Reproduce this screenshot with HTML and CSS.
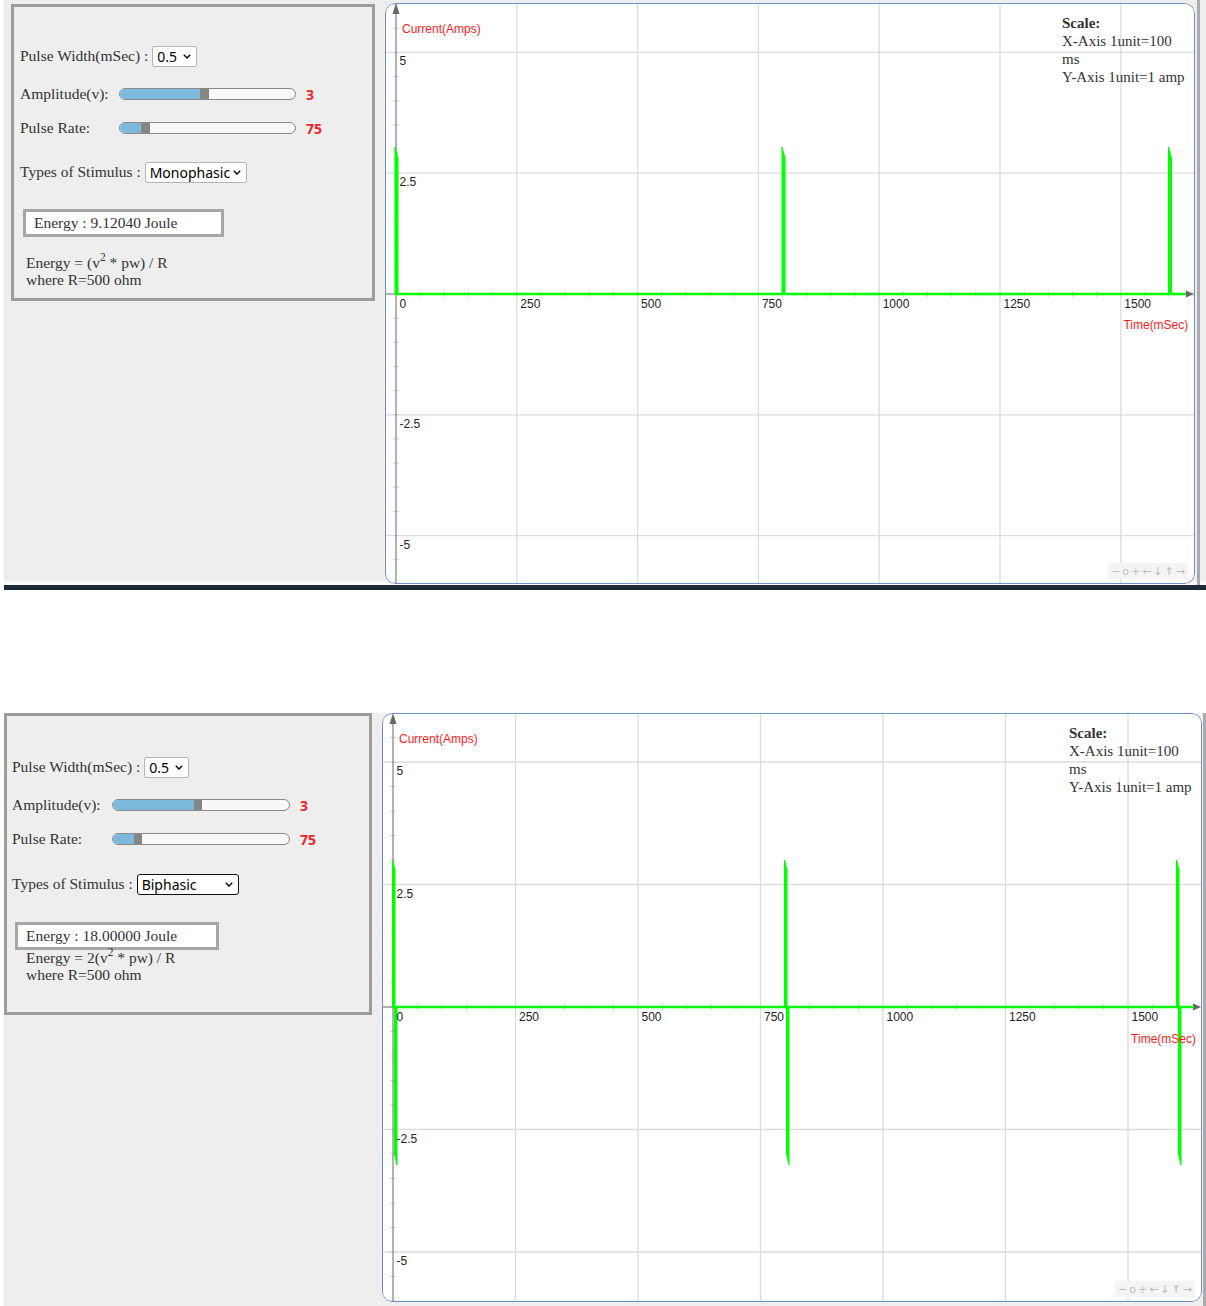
FILE: index.html
```html
<!DOCTYPE html>
<html lang="en">
<head>
<meta charset="utf-8">
<title>Stimulus simulator</title>
<link rel="stylesheet" href="styles.css">
</head>
<body>

<section class="sim sim--mono">
  <div class="panel panel--mono">
    <div class="row row--pw">
      <span class="label">Pulse Width(mSec) :&nbsp;</span>
      <span class="select select--pw">
        <select><option>0.5</option></select>
        <svg class="chev" width="8" height="5" viewBox="0 0 8 5"><polyline points="0.8,0.8 4,4 7.2,0.8"/></svg>
      </span>
    </div>
    <div class="row row--amp">
      <span class="label label--fixed">Amplitude(v):</span>
      <div class="range" role="slider" aria-valuenow="3"><div class="range-fill" style="--pos:80px"></div><div class="range-thumb"></div></div>
      <span class="value">3</span>
    </div>
    <div class="row row--rate">
      <span class="label label--fixed">Pulse Rate:</span>
      <div class="range" role="slider" aria-valuenow="75"><div class="range-fill" style="--pos:21px"></div><div class="range-thumb"></div></div>
      <span class="value">75</span>
    </div>
    <div class="row row--types">
      <span class="label">Types of Stimulus :&nbsp;</span>
      <span class="select select--type">
        <select><option>Monophasic</option><option>Biphasic</option></select>
        <svg class="chev" width="8" height="5" viewBox="0 0 8 5"><polyline points="0.8,0.8 4,4 7.2,0.8"/></svg>
      </span>
    </div>
    <div class="energy">Energy : 9.12040 Joule</div>
    <div class="formula">Energy = (v<sup>2</sup> * pw) / R<br>where R=500 ohm</div>
  </div>

  <div class="chart chart--mono">
    <svg class="plot" width="810" height="581" viewBox="0 0 810 581">
      <defs>
        <pattern id="tx1" patternUnits="userSpaceOnUse" x="-1.08" y="288" width="24.16" height="6"><line class="tick" x1="12.08" y1="0" x2="12.08" y2="6"/></pattern>
        <pattern id="ty1" patternUnits="userSpaceOnUse" x="8" y="278.92" width="6" height="24.16"><line class="tick" x1="0" y1="12.08" x2="6" y2="12.08"/></pattern>
      </defs>
      <g class="grid">
        <line x1="131.8" y1="0" x2="131.8" y2="581"/>
        <line x1="252.6" y1="0" x2="252.6" y2="581"/>
        <line x1="373.4" y1="0" x2="373.4" y2="581"/>
        <line x1="494.2" y1="0" x2="494.2" y2="581"/>
        <line x1="615" y1="0" x2="615" y2="581"/>
        <line x1="735.8" y1="0" x2="735.8" y2="581"/>
        <line x1="0" y1="49.4" x2="810" y2="49.4"/>
        <line x1="0" y1="170.2" x2="810" y2="170.2"/>
        <line x1="0" y1="411.8" x2="810" y2="411.8"/>
        <line x1="0" y1="532.6" x2="810" y2="532.6"/>
      </g>
      <rect x="11" y="288" width="799" height="6" fill="url(#tx1)"/>
      <rect x="8" y="0" width="6" height="581" fill="url(#ty1)"/>
      <g class="axis">
        <line x1="0" y1="291" x2="803" y2="291"/>
        <line x1="11" y1="10" x2="11" y2="581"/>
      </g>
      <g class="arrow">
        <polygon points="809,291 801,287.5 801,294.5"/>
        <polygon points="11,0 7.5,11 14.5,11"/>
      </g>
      <g class="signal">
        <line class="base" x1="11" y1="291" x2="801" y2="291"/>
        <polygon points="10,291 10,144 13,155 13,291"/>
        <polygon points="397,291 397,144 400,155 400,291"/>
        <polygon points="783.5,291 783.5,144 786.5,155 786.5,291"/>
      </g>
      <g class="ticklabel">
        <text x="14.5" y="304.5">0</text>
        <text x="135.3" y="304.5">250</text>
        <text x="256.1" y="304.5">500</text>
        <text x="376.9" y="304.5">750</text>
        <text x="497.7" y="304.5">1000</text>
        <text x="618.5" y="304.5">1250</text>
        <text x="739.3" y="304.5">1500</text>
        <text x="14.5" y="62.4">5</text>
        <text x="14.5" y="183.2">2.5</text>
        <text x="14.5" y="424.8">-2.5</text>
        <text x="14.5" y="545.6">-5</text>
      </g>
      <text class="axis-title" x="17" y="29.5">Current(Amps)</text>
      <text class="axis-title" x="803.3" y="326" text-anchor="end">Time(mSec)</text>
    </svg>
    <div class="scale"><b>Scale:</b><br>X-Axis 1unit=100<br>ms<br>Y-Axis 1unit=1 amp</div>
    <div class="nav"><span>&minus;</span><span>o</span><span>+</span><span>&larr;</span><span>&darr;</span><span>&uarr;</span><span>&rarr;</span></div>
  </div>
  <div class="edge edge--mono"></div>
</section>

<div class="taskbar"></div>

<section class="sim sim--bi">
  <div class="panel panel--bi">
    <div class="row row--pw">
      <span class="label">Pulse Width(mSec) :&nbsp;</span>
      <span class="select select--pw">
        <select><option>0.5</option></select>
        <svg class="chev" width="8" height="5" viewBox="0 0 8 5"><polyline points="0.8,0.8 4,4 7.2,0.8"/></svg>
      </span>
    </div>
    <div class="row row--amp">
      <span class="label label--fixed">Amplitude(v):</span>
      <div class="range" role="slider" aria-valuenow="3"><div class="range-fill" style="--pos:80.6px"></div><div class="range-thumb"></div></div>
      <span class="value">3</span>
    </div>
    <div class="row row--rate">
      <span class="label label--fixed">Pulse Rate:</span>
      <div class="range" role="slider" aria-valuenow="75"><div class="range-fill" style="--pos:20.6px"></div><div class="range-thumb"></div></div>
      <span class="value">75</span>
    </div>
    <div class="row row--types">
      <span class="label">Types of Stimulus :&nbsp;</span>
      <span class="select select--type select--active">
        <select><option>Biphasic</option><option>Monophasic</option></select>
        <svg class="chev" width="8" height="5" viewBox="0 0 8 5"><polyline points="0.8,0.8 4,4 7.2,0.8"/></svg>
      </span>
    </div>
    <div class="energy">Energy : 18.00000 Joule</div>
    <div class="formula">Energy = 2(v<sup>2</sup> * pw) / R<br>where R=500 ohm</div>
  </div>

  <div class="chart chart--bi">
    <svg class="plot" width="820" height="589" viewBox="0 0 820 589">
      <defs>
        <pattern id="tx2" patternUnits="userSpaceOnUse" x="-1.25" y="291" width="24.5" height="6"><line class="tick" x1="12.25" y1="0" x2="12.25" y2="6"/></pattern>
        <pattern id="ty2" patternUnits="userSpaceOnUse" x="8" y="281.75" width="6" height="24.5"><line class="tick" x1="0" y1="12.25" x2="6" y2="12.25"/></pattern>
      </defs>
      <g class="grid">
        <line x1="133.5" y1="0" x2="133.5" y2="589"/>
        <line x1="256" y1="0" x2="256" y2="589"/>
        <line x1="378.5" y1="0" x2="378.5" y2="589"/>
        <line x1="501" y1="0" x2="501" y2="589"/>
        <line x1="623.5" y1="0" x2="623.5" y2="589"/>
        <line x1="746" y1="0" x2="746" y2="589"/>
        <line x1="0" y1="49" x2="820" y2="49"/>
        <line x1="0" y1="171.5" x2="820" y2="171.5"/>
        <line x1="0" y1="416.5" x2="820" y2="416.5"/>
        <line x1="0" y1="539" x2="820" y2="539"/>
      </g>
      <rect x="11" y="291" width="809" height="6" fill="url(#tx2)"/>
      <rect x="8" y="0" width="6" height="589" fill="url(#ty2)"/>
      <g class="axis">
        <line x1="0" y1="294" x2="813" y2="294"/>
        <line x1="11" y1="10" x2="11" y2="589"/>
      </g>
      <g class="arrow">
        <polygon points="819,294 811,290.5 811,297.5"/>
        <polygon points="11,0 7.5,11 14.5,11"/>
      </g>
      <g class="signal">
        <line class="base" x1="11" y1="294" x2="812" y2="294"/>
        <polygon points="10.5,294 10.5,147 13,157 13,294"/>
        <polygon points="12.5,294 12.5,441 15,452 15,294"/>
        <polygon points="402.5,294 402.5,147 405,157 405,294"/>
        <polygon points="404.5,294 404.5,441 407,452 407,294"/>
        <polygon points="794.5,294 794.5,147 797,157 797,294"/>
        <polygon points="796.5,294 796.5,441 799,452 799,294"/>
      </g>
      <g class="ticklabel">
        <text x="14.5" y="307.5">0</text>
        <text x="137" y="307.5">250</text>
        <text x="259.5" y="307.5">500</text>
        <text x="382" y="307.5">750</text>
        <text x="504.5" y="307.5">1000</text>
        <text x="627" y="307.5">1250</text>
        <text x="749.5" y="307.5">1500</text>
        <text x="14.5" y="62">5</text>
        <text x="14.5" y="184.5">2.5</text>
        <text x="14.5" y="429.5">-2.5</text>
        <text x="14.5" y="552">-5</text>
      </g>
      <text class="axis-title" x="17" y="29.5">Current(Amps)</text>
      <text class="axis-title" x="814" y="329.6" text-anchor="end">Time(mSec)</text>
    </svg>
    <div class="scale"><b>Scale:</b><br>X-Axis 1unit=100<br>ms<br>Y-Axis 1unit=1 amp</div>
    <div class="nav"><span>&minus;</span><span>o</span><span>+</span><span>&larr;</span><span>&darr;</span><span>&uarr;</span><span>&rarr;</span></div>
  </div>
  <div class="edge edge--bi"></div>
</section>

</body>
</html>
```

FILE: styles.css
```css
* { box-sizing: border-box; }

body {
  margin: 0;
  background: #fff;
  font-family: "Liberation Serif", "Times New Roman", serif;
  font-size: 15.5px;
  color: #333;
}

/* ---------- sections ---------- */
.sim {
  display: flex;
  align-items: flex-start;
  margin-left: 4px;
  background: #eee;
}
.sim--mono {
  height: 585px;
  box-shadow: inset 0 -4px 0 #f9f9f9;
}
.sim--bi {
  height: 593px;
  margin-top: 123px;
}
.taskbar {
  height: 5px;
  margin-left: 4px;
  background: #1d2b39;
}

.edge {
  flex: none;
  width: 3px;
  align-self: stretch;
  background: #ababab;
}
.edge--mono { margin-left: 2px; height: 585px; }
.edge--bi { margin-left: 1px; }

/* ---------- control panel ---------- */
.panel {
  flex: none;
  border: 3px solid #9d9d9d;
  background: #eee;
  display: flex;
  flex-direction: column;
  align-items: flex-start;
}
.panel--mono {
  width: 364px;
  height: 297px;
  margin: 4px 0 0 7px;
  padding-left: 6px;
}
.panel--bi {
  width: 368px;
  height: 302px;
  padding-left: 5px;
}

.row {
  display: flex;
  align-items: center;
  height: 24px;
  white-space: nowrap;
}
.panel--mono .row--pw { margin-top: 37px; }
.panel--mono .row--amp { margin-top: 14px; }
.panel--mono .row--rate { margin-top: 10px; }
.panel--mono .row--types { margin-top: 20px; }
.panel--bi .row--pw { margin-top: 39px; }
.panel--bi .row--amp { margin-top: 14px; }
.panel--bi .row--rate { margin-top: 10px; }
.panel--bi .row--types { margin-top: 21px; }

.label { color: #333; }
.label--fixed { width: 99px; }
.panel--bi .label--fixed { width: 100px; }

/* select */
.select {
  position: relative;
  display: inline-block;
}
.select select {
  appearance: none;
  -webkit-appearance: none;
  display: block;
  margin: 0;
  background: #fff;
  border: 1px solid #b4b4b4;
  border-radius: 2px;
  font-family: "Noto Sans", "Open Sans", sans-serif;
  font-size: 14px;
  line-height: 19px;
  color: #000;
  padding: 0 0 0 4px;
  height: 21px;
  outline: none;
}
.select--pw select { width: 45px; }
.select--type select { width: 102px; height: 21px; }
.select--active select {
  border: 1.5px solid #111;
  border-radius: 3px;
}
.chev {
  position: absolute;
  right: 6px;
  top: 8px;
  fill: none;
  stroke: #111;
  stroke-width: 1.5;
  pointer-events: none;
}

/* range */
.range {
  flex: none;
  display: flex;
  width: 177px;
  height: 12px;
  border: 1px solid #8a8a8a;
  border-radius: 6px;
  background: #f8f8f8;
  overflow: hidden;
}
.panel--bi .range { width: 178px; }
.range-fill {
  width: var(--pos);
  background: #7db9dd;
}
.range-thumb {
  width: 8.5px;
  background: #868686;
}
.value {
  margin-left: 10px;
  font-family: "Noto Sans", "Open Sans", sans-serif;
  font-weight: 700;
  font-size: 14px;
  color: #ee2424;
}

/* energy */
.energy {
  width: 201px;
  height: 28px;
  margin: 25px 0 0 3px;
  border: 3px solid #a6a6a6;
  background: #fff;
  padding-left: 8px;
  line-height: 22px;
  color: #333;
  white-space: nowrap;
}
.panel--bi .energy {
  width: 204px;
  margin: 26px 0 0 3px;
}
.formula {
  margin: 17px 0 0 6px;
  line-height: 17px;
  color: #333;
}
.panel--bi .formula { margin: -1px 0 0 14px; }
.formula sup {
  font-size: 11.5px;
  line-height: 0;
  vertical-align: 7px;
}

/* ---------- chart ---------- */
.chart {
  position: relative;
  flex: none;
  margin-left: 10px;
  background: #fff;
  border-radius: 10px;
  overflow: hidden;
}
.chart::after {
  content: "";
  position: absolute;
  inset: 0;
  border: 1px solid #6d91c0;
  border-radius: 10px;
  pointer-events: none;
}
.chart--mono { width: 810px; height: 581px; margin-top: 3px; }
.chart--bi { width: 820px; height: 589px; }

.plot { display: block; }
.grid line { stroke: #dcdcdc; stroke-width: 1.3; }
.tick { stroke: #d2d2d2; stroke-width: 1; }
.axis line { stroke: #666; stroke-width: 1; }
.arrow polygon { fill: #666; }
.signal polygon { fill: #00ff00; stroke: #00ff00; stroke-width: 1; stroke-linejoin: round; }
.signal .base { stroke: #00ff00; stroke-width: 2.6; }
.ticklabel text {
  font-family: "Liberation Sans", Arial, sans-serif;
  font-size: 12px;
  fill: #222;
}
.axis-title {
  font-family: "Liberation Sans", Arial, sans-serif;
  font-size: 12px;
  fill: #ff1a1a;
}

.scale {
  position: absolute;
  top: 11px;
  right: 6px;
  width: 127px;
  font-size: 15px;
  line-height: 18px;
  color: #333;
  white-space: nowrap;
}

.nav {
  position: absolute;
  right: 7px;
  bottom: 5px;
  display: flex;
  align-items: center;
  gap: 2px;
  height: 16px;
  padding: 0 3px;
  background: #f4f4f4;
  color: #bdbdbd;
  font-family: "DejaVu Sans", "Liberation Sans", sans-serif;
  font-size: 11px;
}
.nav span { display: block; }
```
